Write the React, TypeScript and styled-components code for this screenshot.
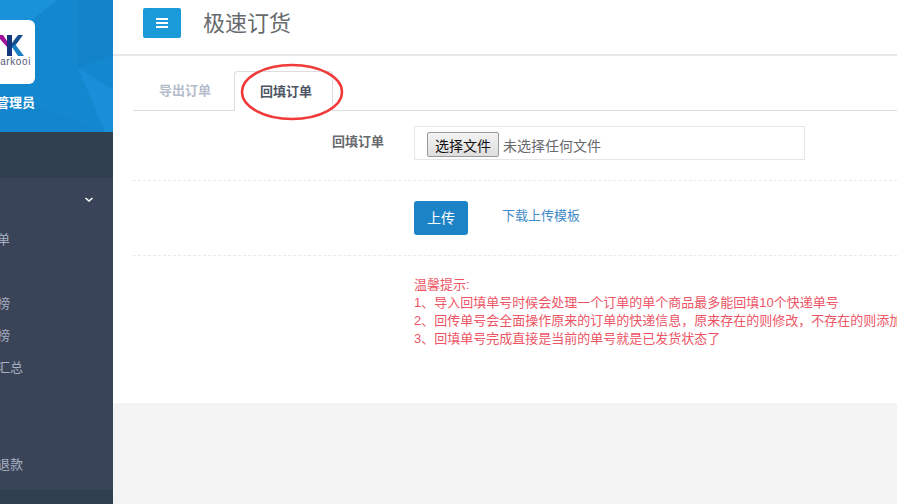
import React from 'react';
import styled, { createGlobalStyle } from 'styled-components';

const Global = createGlobalStyle`
  html, body { margin: 0; padding: 0; width: 897px; height: 504px; overflow: hidden; background: #f3f3f4; }
  body { font-family: "Liberation Sans", "Noto Sans CJK SC", sans-serif; }
  * { box-sizing: border-box; }
`;
const Page = styled.div`
  display: flex; width: 1004px; height: 504px; margin-left: -107px; overflow: hidden;
`;
const Sidebar = styled.aside`
  width: 220px; flex: none; display: flex; flex-direction: column; background: #3a4459;
`;
const Profile = styled.div`
  position: relative; height: 132px; background: #1488cf; overflow: hidden;
  display: flex; flex-direction: column; align-items: flex-end; padding: 20px 78px 0 0;
`;
const Facets = styled.svg`position: absolute; inset: 0; width: 100%; height: 100%;`;
const LogoBox = styled.div`
  position: relative; width: 100px; height: 64px; border-radius: 6px; background: #fff; overflow: hidden;
  display: flex; flex-direction: column; align-items: flex-end; padding: 15px 4px 0 0;
`;
const LogoMark = styled.svg`width: 30px; height: 21px; display: block; margin-right: 1px;`;
const LogoWord = styled.span`
  font-size: 10px; line-height: 10px; margin-top: 1px; color: #555a78; letter-spacing: 0.6px;
`;
const Role = styled.div`
  position: relative; margin-top: 10px; font-size: 13px; line-height: 18px; font-weight: 700; color: #fff; white-space: nowrap;
`;
const Band = styled.div<{ $h: number }>`height: ${p => p.$h}px; flex: none; background: #30404f;`;
const Menu = styled.nav`flex: 1; display: flex; flex-direction: column; padding-top: 6px;`;
const MenuItem = styled.div<{ $top: number; $right: number }>`
  position: relative; margin-top: ${p => p.$top}px; height: 32px; line-height: 32px; padding-right: ${p => p.$right}px;
  font-size: 13px; color: #a7b1c2; text-align: right; white-space: nowrap;
`;
const Chevron = styled.svg`position: absolute; right: 19px; top: 12px; width: 10px; height: 8px;`;

const Main = styled.main`flex: 1; display: flex; flex-direction: column; min-width: 0;`;
const TopBar = styled.header`
  height: 56px; flex: none; background: #fff; border-bottom: 2px solid #e7e7e7;
  display: flex; align-items: flex-start; padding: 8px 0 0 30px; gap: 22px;
`;
const MenuButton = styled.button`
  width: 38px; height: 30px; padding: 0; border: 0; border-radius: 2px; background: #1a9ad8;
  display: flex; align-items: center; justify-content: center;
`;
const Title = styled.h1`
  margin: 0; font-size: 22px; line-height: 32px; font-weight: 400; color: #676a6c;
`;
const Panel = styled.section`
  position: relative; height: 347px; flex: none; background: #fff; padding: 15px 0 0 20px;
`;
const Tabs = styled.div`
  display: flex; height: 40px; border-bottom: 1px solid #ddd;
`;
const Tab = styled.div<{ $active?: boolean }>`
  height: ${p => (p.$active ? 40 : 39)}px; line-height: 40px; font-size: 13px; font-weight: 700; white-space: nowrap;
  padding: ${p => (p.$active ? '0 20px 0 25px' : '0 23px 0 26px')};
  color: ${p => (p.$active ? '#4d5563' : '#b5bccb')};
  background: #fff;
  ${p => p.$active && 'border: 1px solid #ddd; border-bottom: 0; border-radius: 4px 4px 0 0;'}
`;
const Mark = styled.svg`position: absolute; left: 128px; top: 14px; width: 106px; height: 60px; overflow: visible;`;
const Row = styled.div<{ $top: number }>`
  display: grid; grid-template-columns: 251px 1fr; column-gap: 30px; padding: ${p => p.$top}px 0 20px;
  border-bottom: 1px dashed #eaeaea;
`;
const Label = styled.label`
  font-size: 13px; font-weight: 700; color: #676a6c; text-align: right; line-height: 32px;
`;
const FileBox = styled.div`
  width: 391px; height: 34px; border: 1px solid #e5e6e7; display: flex; align-items: center; padding: 3px 0 0 12px; gap: 4px;
`;
const FileBtn = styled.button`
  width: 72px; height: 25px; padding: 0; border: 1px solid #999; border-radius: 2px;
  background: linear-gradient(#f3f3f3, #dedede); font: 14px "Liberation Sans", "Noto Sans CJK SC", sans-serif; color: #111;
`;
const FileName = styled.span`font-size: 14px; color: #676a6c; white-space: nowrap;`;
const Actions = styled.div`display: flex; align-items: flex-start; gap: 34px;`;
const Upload = styled.button`
  width: 54px; height: 34px; border: 0; border-radius: 3px; background: #1c84c6; color: #fff; padding: 0 0 2px;
  font: 14px "Liberation Sans", "Noto Sans CJK SC", sans-serif;
`;
const Link = styled.a`
  font-size: 13px; line-height: 30px; color: #428bca; text-decoration: none; white-space: nowrap;
`;
const Notes = styled.div`
  margin: 20px 0 0 281px; font-size: 13px; line-height: 18px; color: #ed5565; white-space: nowrap;
`;
const Footer = styled.div`flex: 1; background: #f3f3f4;`;

export default function App() {
  return (
    <>
      <Global />
      <Page>
        <Sidebar>
          <Profile>
            <Facets viewBox="0 0 220 132" preserveAspectRatio="none">
              <polygon points="107,0 165,0 125,30 100,60" fill="#1a92da" />
              <polygon points="185,68 220,90 220,132 212,132" fill="#188fd8" />
              <polygon points="185,0 220,0 220,55 185,68" fill="#1283c9" />
              <polygon points="107,90 212,132 107,132" fill="#1385cc" />
            </Facets>
            <LogoBox>
              <LogoMark viewBox="0 0 30 21">
                <polygon points="0,0 3,0 7,6 7,12 0,4" fill="#a0109a" />
                <polygon points="7,0 12,0 12,21 7,21" fill="#14367f" />
                <polygon points="12,8 18,0 23,0 15,11 12,13" fill="#14508f" />
                <polygon points="12,12 15,9 24,21 18,21" fill="#1a7fc4" />
              </LogoMark>
              <LogoWord>arkooi</LogoWord>
            </LogoBox>
            <Role>超级管理员</Role>
          </Profile>
          <Band $h={46} />
          <Menu>
            <MenuItem $top={0} $right={90}>
              <Chevron viewBox="0 0 10 8"><path d="M1.5 2l3.5 3 3.5-3" fill="none" stroke="#fff" strokeWidth="1.6" /></Chevron>
            </MenuItem>
            <MenuItem $top={8} $right={103}>极速订单</MenuItem>
            <MenuItem $top={32} $right={103}>销售排行榜</MenuItem>
            <MenuItem $top={0} $right={103}>商品排行榜</MenuItem>
            <MenuItem $top={0} $right={90}>业绩汇总</MenuItem>
            <MenuItem $top={65} $right={90}>仅退款</MenuItem>
          </Menu>
          <Band $h={14} />
        </Sidebar>
        <Main>
          <TopBar>
            <MenuButton aria-label="menu">
              <svg width="12" height="10" viewBox="0 0 12 10"><path d="M0 1h12M0 5h12M0 9h12" stroke="#fff" strokeWidth="2" /></svg>
            </MenuButton>
            <Title>极速订货</Title>
          </TopBar>
          <Panel>
            <Tabs>
              <Tab>导出订单</Tab>
              <Tab $active>回填订单</Tab>
            </Tabs>
            <Mark viewBox="0 0 106 60">
              <ellipse cx="51" cy="22" rx="50" ry="27" fill="none" stroke="#f03a3a" strokeWidth="2.5" />
            </Mark>
            <Row $top={15}>
              <Label>回填订单</Label>
              <FileBox>
                <FileBtn>选择文件</FileBtn>
                <FileName>未选择任何文件</FileName>
              </FileBox>
            </Row>
            <Row $top={20}>
              <span />
              <Actions>
                <Upload>上传</Upload>
                <Link>下载上传模板</Link>
              </Actions>
            </Row>
            <Notes>
              温馨提示:<br />
              1、导入回填单号时候会处理一个订单的单个商品最多能回填10个快递单号<br />
              2、回传单号会全面操作原来的订单的快递信息，原来存在的则修改，不存在的则添加<br />
              3、回填单号完成直接是当前的单号就是已发货状态了
            </Notes>
          </Panel>
          <Footer />
        </Main>
      </Page>
    </>
  );
}
